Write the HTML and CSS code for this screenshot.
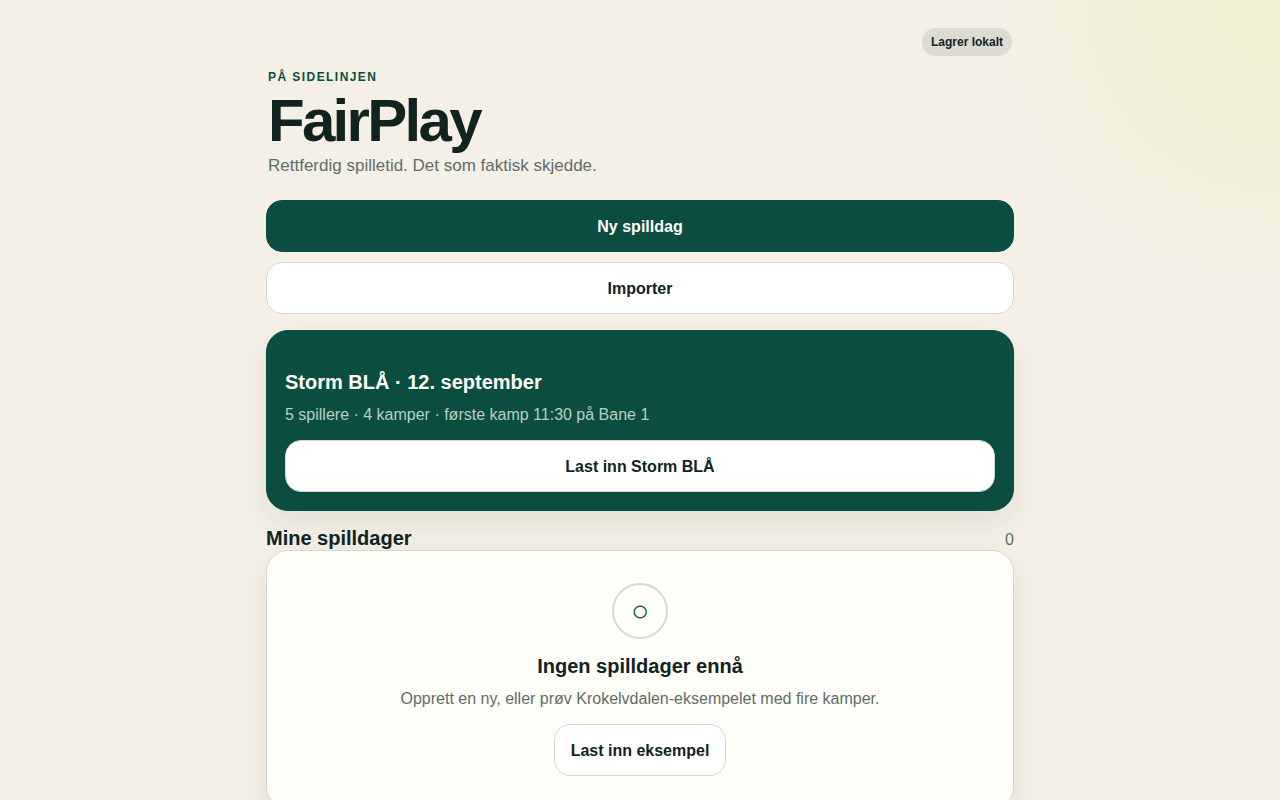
FILE: index.html
```html
<!DOCTYPE html>
<html lang="nb">
<head>
<meta charset="utf-8">
<meta name="viewport" content="width=device-width, initial-scale=1">
<title>FairPlay</title>
<link rel="stylesheet" href="styles.css">
</head>
<body>
<main class="app">
  <div class="status-row"><span class="status">Lagrer lokalt</span></div>
  <header class="hero">
    <p class="eyebrow">På sidelinjen</p>
    <h1 class="title">FairPlay</h1>
    <p class="tagline">Rettferdig spilletid. Det som faktisk skjedde.</p>
  </header>
  <div class="actions">
    <button class="button button-primary" type="button">Ny spilldag</button>
    <button class="button" type="button">Importer</button>
  </div>
  <section class="card card-featured">
    <h2 class="heading">Storm BLÅ · 12. september</h2>
    <p class="details">5 spillere · 4 kamper · første kamp 11:30 på Bane 1</p>
    <button class="button" type="button">Last inn Storm BLÅ</button>
  </section>
  <div class="section-head">
    <h2 class="heading">Mine spilldager</h2>
    <span class="count">0</span>
  </div>
  <section class="card card-empty">
    <div class="empty-icon" aria-hidden="true">○</div>
    <h2 class="heading">Ingen spilldager ennå</h2>
    <p class="details">Opprett en ny, eller prøv Krokelvdalen-eksempelet med fire kamper.</p>
    <button class="button" type="button">Last inn eksempel</button>
  </section>
</main>
</body>
</html>
```
FILE: styles.css
```css
:root {
  --ink: #10231f;
  --muted: #5f6d68;
  --green: #0b4d40;
  --line: #d3d8d0;
  --paper: #fffef8;
  --sand: #f4f0e6;
}

* {
  box-sizing: border-box;
}

body {
  margin: 0;
  min-height: 100vh;
  color: var(--ink);
  background: radial-gradient(circle at 100% 0, rgba(236, 238, 184, 0.45), rgba(236, 238, 184, 0.34) 110px, rgba(236, 238, 184, 0) 288px) var(--sand);
  font: 16px/24px "Liberation Sans", Arial, sans-serif;
}

h1,
h2,
p {
  margin: 0;
}

.app {
  max-width: 780px;
  margin: 0 auto;
  padding: 28px 16px 48px;
}

.status-row {
  display: flex;
  justify-content: flex-end;
  padding-right: 2px;
}

.status {
  padding: 5px 9px;
  border-radius: 14px;
  background: #dcdcd1;
  font-size: 12px;
  font-weight: 700;
  line-height: 18px;
}

.hero {
  padding: 12px 2px 22px;
}

.eyebrow {
  color: var(--green);
  font-size: 12px;
  font-weight: 700;
  line-height: 18px;
  letter-spacing: 0.12em;
  text-transform: uppercase;
}

.title {
  margin: 6px 0 4px;
  font-size: 60px;
  line-height: 58px;
  letter-spacing: -0.045em;
}

.tagline {
  color: var(--muted);
  font-size: 17px;
}

.actions {
  display: grid;
  gap: 10px;
  margin-bottom: 16px;
}

.button {
  min-height: 52px;
  padding: 12px 16px;
  border: 1px solid var(--line);
  border-radius: 16px;
  color: var(--ink);
  background: #fff;
  font: inherit;
  font-weight: 700;
  line-height: 23px;
  cursor: pointer;
}

.button-primary {
  border-color: var(--green);
  color: #fff;
  background: var(--green);
}

.card {
  display: flex;
  flex-direction: column;
  border: 1px solid var(--line);
  border-radius: 22px;
  background: var(--paper);
  box-shadow: 0 12px 32px rgba(50, 50, 20, 0.09);
}

.card-featured {
  padding: 36px 18px 18px;
  border-color: var(--green);
  color: #fff;
  background: var(--green);
}

.heading {
  font-size: 20px;
  line-height: 30px;
}

.details {
  margin: 6px 0 13px;
  color: var(--muted);
}

.card-featured .details {
  color: #b9cec8;
}

.section-head {
  display: flex;
  align-items: baseline;
  justify-content: space-between;
  margin-top: 12px;
  height: 27px;
}

.count {
  color: var(--muted);
}

.card-empty {
  align-items: center;
  padding: 32px 18px;
  text-align: center;
}

.empty-icon {
  display: grid;
  place-items: center;
  width: 56px;
  height: 56px;
  margin-bottom: 12px;
  border: 2px solid var(--line);
  border-radius: 50%;
  color: var(--green);
  font-size: 30px;
}
```
